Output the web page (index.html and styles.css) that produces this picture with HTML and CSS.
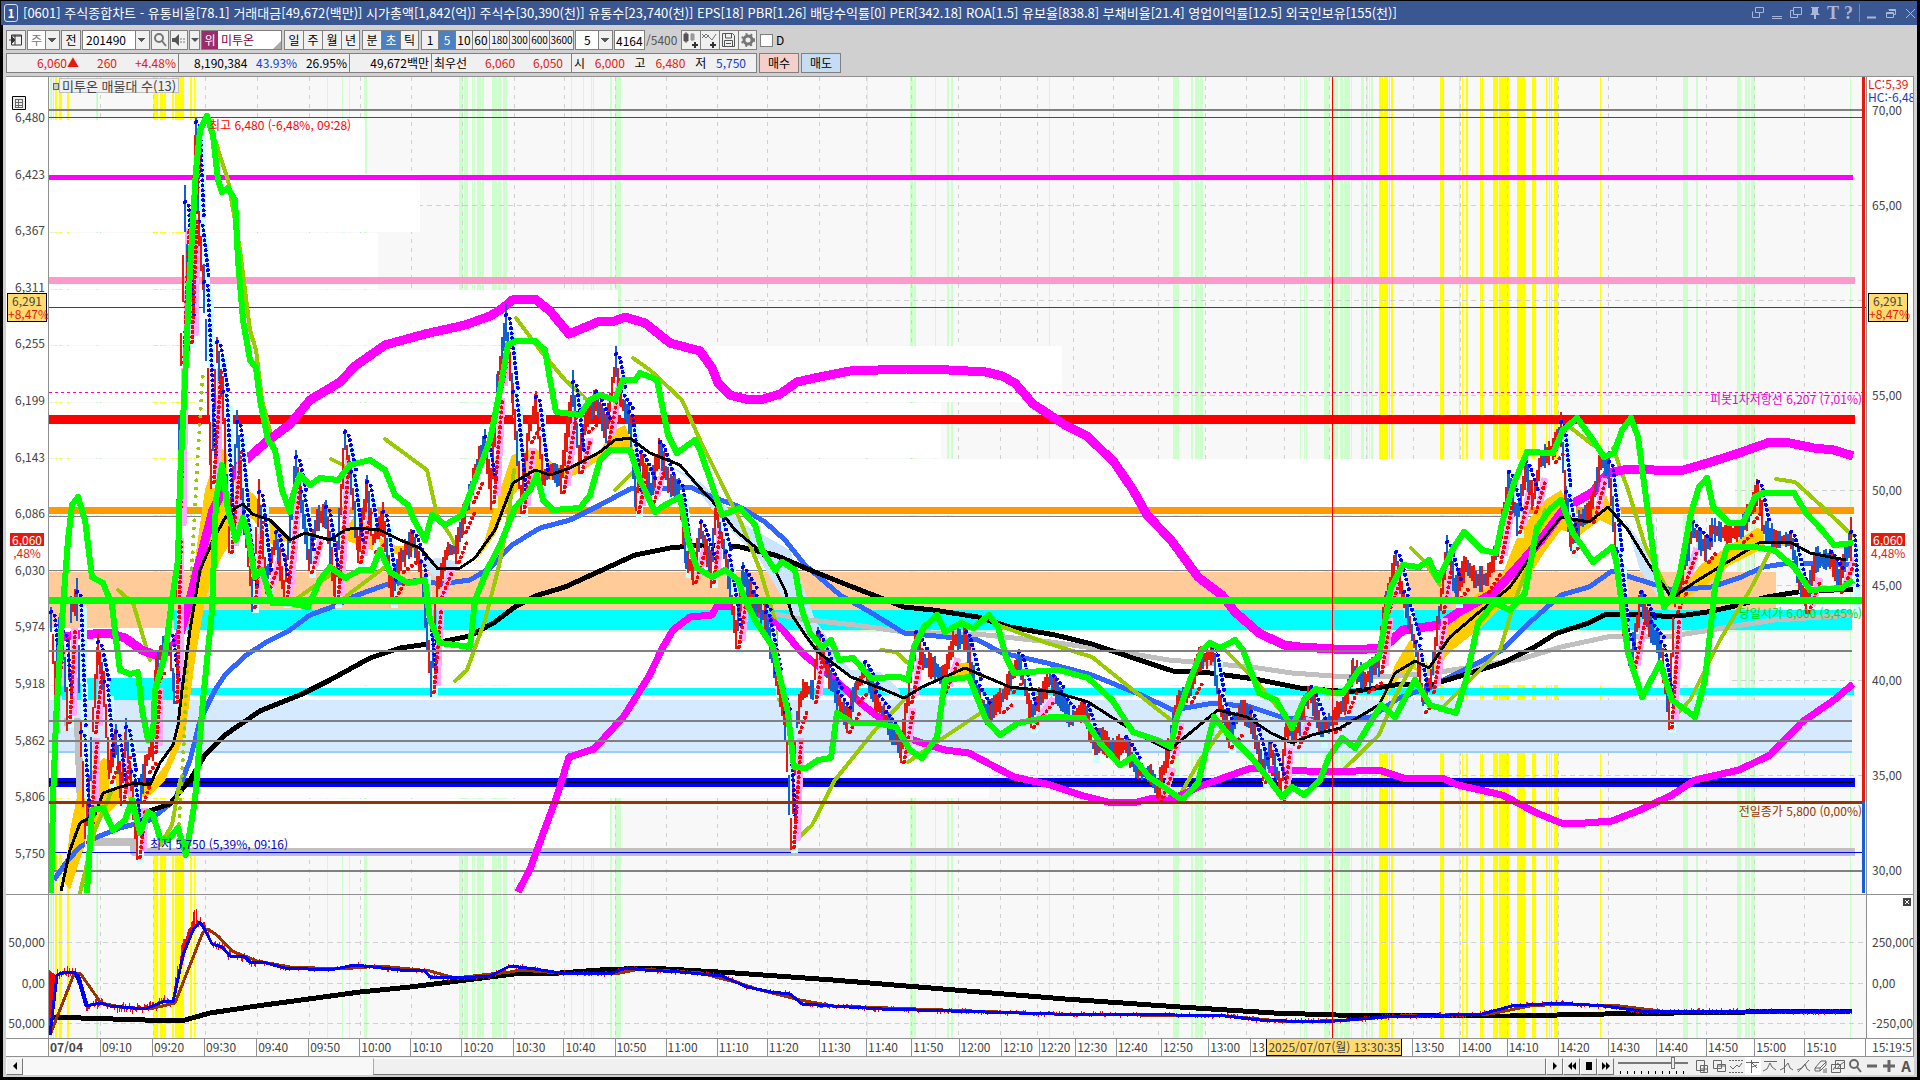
FILE: index.html
```html
<!DOCTYPE html>
<html lang="ko">
<head>
    <meta charset="UTF-8">
    <meta name="viewport" content="width=device-width, initial-scale=1.0">
    <title>[0601] 주식종합차트</title>
    <link rel="stylesheet" href="styles.css">
</head>

<body>
    <header class="titlebar">
        <span class="win-no">1</span>
        <h1>[0601] 주식종합차트 - 유통비율[78.1] 거래대금[49,672(백만)] 시가총액[1,842(억)] 주식수[30,390(천)] 유통수[23,740(천)] EPS[18] PBR[1.26] 배당수익률[0] PER[342.18] ROA[1.5] 유보율[838.8] 부채비율[21.4] 영업이익률[12.5] 외국인보유[155(천)]</h1>
        <div class="win-btns">
            <button aria-label="새창"><svg width="14" height="14"><path d="M4.500 1.500h8v5h-8zM1.500 5.500v6h7v-5" /></svg></button>
            <button aria-label="내리기"><svg width="14" height="14"><path d="M2 10.500h10M2 12.500h10" /></svg></button>
            <button aria-label="복사"><svg width="14" height="14"><path d="M4.500 1.500h8v7h-8zM4 4.500H1.500v7h7V9" /></svg></button>
            <button aria-label="고정"><svg width="14" height="14"><path d="M3 1h8v1H10v5l2 2H8v4H6V9H2l2-2V2H3z" fill="#a9b8d8" stroke="none" /></svg></button>
            <button class="serif">T</button>
            <button class="serif">?</button>
            <i class="bar"></i>
            <button aria-label="최소화"><svg width="14" height="14"><path d="M2 11.500h9" stroke-width="2" /></svg></button>
            <button aria-label="복원"><svg width="14" height="14"><path d="M4.500 3.500h7v5h-2M2.500 6.500h7v5h-7zM3 7.500h6M5 4.500h6" /></svg></button>
            <button aria-label="닫기"><svg width="14" height="14"><path d="M3 3l9 9M12 3l-9 9" /></svg></button>
        </div>
    </header>

    <main class="window">
        <div class="toolbar">
            <button class="ic" aria-label="패널"><svg width="16" height="16"><path d="M3.500 3v10h10V3zM7 3v10M3 4h11" fill="none" stroke="#333" /><path d="M1 8h5M4 5l3 3-3 3z" fill="#333" stroke="#333" /></svg></button>
            <select class="kind dim" aria-label="종류"><option>주</option></select>
            <button class="ic">전</button>
            <select class="code" aria-label="종목코드"><option>201490</option></select>
            <button class="ic small" aria-label="검색"><svg width="16" height="16" fill="none" stroke="#777" stroke-width="2"><circle cx="7" cy="6" r="4" /><path d="M10 9l4 5" /></svg></button>
            <button class="ic small" aria-label="소리"><svg width="16" height="16"><path d="M1 6h3l4-4v12l-4-4H1z" fill="#555" /><path d="M10 6v5M13 6v5" stroke="#777" stroke-dasharray="2 1" /></svg></button>
            <button class="tiny" aria-label="소리 메뉴"><i class="caret"></i></button>
            <span class="name"><b>위</b>미투온</span>
            <div class="group">
                <button>일</button><button>주</button><button>월</button><button>년</button>
            </div>
            <div class="group">
                <button>분</button><button class="on">초</button><button>틱</button>
            </div>
            <div class="group nums">
                <button>1</button><button class="on">5</button><button>10</button><button>60</button><button class="n3">180</button><button class="n3">300</button><button class="n3">600</button><button class="n4">3600</button>
            </div>
            <select class="gap5" aria-label="주기"><option>5</option></select>
            <input class="count" type="text" value="4164" aria-label="개수">
            <span class="total">/5400</span>
            <div class="group icons">
                <button aria-label="봉 추가"><svg width="18" height="18"><path d="M2 3h4v7H2zM4 1v11" fill="#555" stroke="#555" /><path d="M9 3h3v6H9zM10 2v8" fill="#999" stroke="#999" /><path d="M13 11v6M10 14h6" stroke="#333" stroke-width="2" /></svg></button>
                <button aria-label="지표 추가"><svg width="18" height="18" fill="none"><path d="M1 7l4-4 6 6 4-6M1 3l4 4 3-3" stroke="#777" /><path d="M12 11v6M9 14h6" stroke="#333" stroke-width="2" /></svg></button>
                <button aria-label="저장"><svg width="18" height="18" fill="none" stroke="#555"><path d="M2.500 2.500h10l2 2v11h-12zM5.500 3v4h6V3M4.500 15V9.500h8V15M6 12.500h5" /></svg></button>
                <button aria-label="설정"><svg width="18" height="18" fill="none" stroke="#777"><circle cx="9" cy="9" r="4" stroke-width="3" /><circle cx="9" cy="9" r="6" stroke-width="2" stroke-dasharray="2 3" /></svg></button>
            </div>
            <label class="chk"><input type="checkbox"> D</label>
        </div>

        <div class="quote">
            <div class="q q1"><b class="up">6,060▲</b><b class="up">260</b><b class="up">+4.48%</b></div>
            <div class="q q2"><b>8,190,384</b><b class="down">43.93%</b><b>26.95%</b></div>
            <div class="q q3"><b>49,672백만</b></div>
            <div class="q q4"><b>최우선</b><b class="up">6,060</b><b class="up">6,050</b></div>
            <div class="q q5"><b>시</b><b class="up">6,000</b><b>고</b><b class="up">6,480</b><b>저</b><b class="down">5,750</b></div>
            <button class="buy">매수</button>
            <button class="sell">매도</button>
        </div>

        <section class="chart">
            <div class="axis left main-axis">
                <span>6,480</span><span>6,423</span><span>6,367</span><span>6,311</span><span>6,255</span><span>6,199</span><span>6,143</span><span>6,086</span><span>6,030</span><span>5,974</span><span>5,918</span><span>5,862</span><span>5,806</span><span>5,750</span>
                <svg class="grid-icon" width="14" height="14"><path d="M.5.5h13v13H.5z" fill="#eee" stroke="#000" /><path d="M3 3.500h8M3 6.500h8M3 9.500h8M3.500 3v8M6.500 3v8M10.500 3v8M3 11.500h8" stroke="#666" /></svg>
                <div class="cursor-tag">6,291<em>+8,47%</em></div>
                <div class="last-tag"><b>6,060</b><em>,48%</em></div>
            </div>

            <div class="plot">
                <svg id="plot" viewBox="49 77 1817 961" preserveAspectRatio="none"></svg>
                <div class="legend">미투온 매물대 수(13)</div>
                <span class="note high">최고 6,480 (-6,48%, 09:28)</span>
                <span class="note low">최저 5,750 (5,39%, 09:16)</span>
                <span class="note pivot">피봇1차저항선 6,207 (7,01%)</span>
                <span class="note open">당일시가 6,000 (3,45%)</span>
                <span class="note close">전일종가 5,800 (0,00%)</span>
            </div>

            <div class="axis right main-axis">
                <div class="lchc"><span class="up">LC:5,39</span><span class="down">HC:-6,48</span></div>
                <span>70,00</span><span>65,00</span><span></span><span>55,00</span><span>50,00</span><span>45,00</span><span>40,00</span><span>35,00</span><span>30,00</span>
                <div class="cursor-tag">6,291<em>+8,47%</em></div>
                <div class="last-tag"><b>6,060</b><em>4,48%</em></div>
            </div>

            <div class="axis left sub-axis"><span>50,000</span><span>0,00</span><span>50,000</span></div>
            <div class="axis right sub-axis">
                <button class="close-x" aria-label="지표 닫기"><svg width="8" height="8"><path d="M2 2l4 4M6 2L2 6" stroke="#fff" /></svg></button>
                <span>250,000</span><span>0,00</span><span>-250,000</span>
            </div>

            <div class="time-pad"></div>
            <div class="times" id="times"><div class="time-tag">2025/07/07(월) 13:30:35</div></div>
            <div class="time-end">15:19:5</div>
        </section>

        <footer class="bottom">
            <button class="sq" aria-label="왼쪽"><svg width="10" height="10"><path d="M7 1v8L3 5z" /></svg></button>
            <div class="track"><div class="thumb"></div></div>
            <button class="sq" aria-label="재생"><svg width="10" height="10"><path d="M3 1v8l4-4z" /></svg></button>
            <button class="sq" aria-label="느리게"><svg width="10" height="10"><path d="M5 1v8L1 5zM9 1v8L5 5z" /></svg></button>
            <button class="sq" aria-label="정지"><svg width="10" height="10"><path d="M2 1h6v8H2z" /></svg></button>
            <button class="sq" aria-label="빠르게"><svg width="10" height="10"><path d="M1 1v8l4-4zM5 1v8l4-4z" /></svg></button>
            <div class="speed"><input type="range" min="0" max="10" value="8" aria-label="속도"></div>
            <div class="tools">
                <button aria-label="창 추가"><svg width="16" height="16"><path d="M2.500 2.500h8v10h-8zM6.500 7.500h7v7h-7zM10 8v6M7 11h6" /></svg></button>
                <button aria-label="창 겹침"><svg width="16" height="16"><path d="M2.500 2.500h8v8h-8zM6.500 6.500h8v7h-8zM7 8h7" /></svg></button>
                <button aria-label="영역"><svg width="16" height="16"><path d="M1 2.500h14M1 14.500h14" stroke-dasharray="2 1" /><path d="M2 8l3 3 4-4 2 2 3-4" /></svg></button>
                <button class="on" aria-label="십자선"><svg width="16" height="16"><path d="M1 4.500h13M6.500 2v13M7 5l5 5M7 9l5-2" /></svg></button>
                <button aria-label="고점"><svg width="16" height="16"><path d="M2 3.500h13M1 13l4-2 3-6 2 4 4 3" /></svg></button>
                <button aria-label="저점"><svg width="16" height="16"><path d="M5.500 1v14M1 12l4-2 4-5 2 5 3 2" /></svg></button>
                <button aria-label="추세선"><svg width="16" height="16"><path d="M2 14L13 2M1 12l5-2 3-4 2 5 3 2" /></svg></button>
                <button aria-label="지우개"><svg width="16" height="16"><path d="M2 10l6-7h5v4l-6 6H2zM2 10h5l6-6M7 10v3M11 11v4M13 10v5" /></svg></button>
                <button aria-label="복제"><svg width="16" height="16"><path d="M5.500 2.500h9v8h-9zM1.500 6.500h9v8h-9z" /><path d="M3 12l2-3 2 2 3-4M7 5l3 2 4-3" /></svg></button>
                <button aria-label="확대경"><svg width="16" height="16" stroke-width="2"><circle cx="7" cy="6" r="4" /><path d="M10 9l4 5" /></svg></button>
                <button aria-label="축소"><svg width="16" height="16"><path d="M3 8h10" stroke-width="3" /></svg></button>
                <button aria-label="확대"><svg width="16" height="16"><path d="M2 8h12M8 2v12" stroke-width="3" /></svg></button>
                <button class="a">A</button>
            </div>
        </footer>
    </main>

    <script src="chart.js"></script>
</body>
</html>
```
FILE: styles.css
```css
* {
    box-sizing: border-box;
}
body {
    margin: 0;
    height: 100vh;
    display: flex;
    flex-direction: column;
    padding: 1px 3px 3px 1px;
    background: #000;
    overflow: hidden;
    font-family: "Noto Sans CJK KR", sans-serif;
    font-size: 12px;
    line-height: 14px;
    color: #000;
}
button, input, select {
    font: inherit;
    color: inherit;
    margin: 0;
    padding: 0;
}
em, b {
    font-style: normal;
    font-weight: normal;
}
.up { color: #e61a0c; }
.down { color: #1040c8; }

/* title bar */
.titlebar {
    height: 24px;
    flex: none;
    display: flex;
    align-items: center;
    background: #3a5791;
    color: #fff;
    padding: 0 0 0 3px;
}
.win-no {
    width: 14px;
    height: 18px;
    line-height: 16px;
    text-align: center;
    border: 1px solid #dbe2f0;
    border-radius: 3px;
    font-weight: bold;
    margin-right: 5px;
}
.titlebar h1 {
    margin: 0;
    flex: 1;
    font-size: 13px;
    font-weight: normal;
    white-space: pre;
}
.win-btns {
    display: flex;
    align-items: center;
    gap: 5px;
}
.win-btns button {
    width: 14px;
    height: 16px;
    background: none;
    border: 0;
    color: #a9b8d8;
}
.win-btns svg {
    fill: none;
    stroke: #a9b8d8;
    display: block;
}
.win-btns .serif {
    font-family: "Liberation Serif", serif;
    font-size: 18px;
    font-weight: bold;
    width: 11px;
}
.bar {
    width: 1px;
    height: 18px;
    background: #7188b5;
}

.window {
    flex: 1;
    min-height: 0;
    display: flex;
    flex-direction: column;
    margin-left: 2px;
    padding: 5px 3px 2px;
    background: #d0d0d0;
}

/* toolbar */
.toolbar {
    display: flex;
    align-items: center;
    height: 20px;
    flex: none;
    gap: 1px;
}
.toolbar button, .toolbar select, .count, .name {
    height: 20px;
    border: 1px solid #808080;
    background: #f0f0f0;
    white-space: nowrap;
}
.toolbar button {
    display: flex;
    align-items: center;
    justify-content: center;
}
.ic { width: 20px; }
.small { width: 18px; }
.toolbar .tiny { width: 11px; }
.caret {
    border: 4px solid transparent;
    border-top-color: #555;
    border-bottom: 0;
}
.toolbar select {
    appearance: none;
    border-radius: 0;
    padding-left: 3px;
    background: linear-gradient(45deg, transparent 50%, #555 50%) right 7px center / 4px 4px no-repeat,
        linear-gradient(-45deg, transparent 50%, #555 50%) right 3px center / 4px 4px no-repeat,
        linear-gradient(#808080, #808080) right 13px center / 1px 20px no-repeat,
        linear-gradient(#f0f0f0, #f0f0f0) right / 13px 20px no-repeat, #fff;
}
.kind { width: 33px; }
.dim { color: #777; }
.code { width: 68px; }
.toolbar .gap5 {
    width: 38px;
    padding-left: 8px;
}
.name {
    position: relative;
    display: flex;
    align-items: center;
    width: 81px;
    background: #fff;
    color: #800040;
    gap: 3px;
}
.name b {
    background: #9c2b6c;
    color: #fff;
    height: 18px;
    line-height: 18px;
    width: 16px;
    text-align: center;
}
.name::after {
    content: "";
    position: absolute;
    right: 0;
    bottom: 0;
    border: 4px solid #aaa;
    border-top-color: transparent;
    border-left-color: transparent;
}
.group {
    display: flex;
    margin-left: 1px;
}
.group button {
    width: 19px;
    border-right-width: 0;
}
.group button:last-child {
    border-right-width: 1px;
}
.nums button { width: 17px; }
.nums .n3 {
    width: 20px;
    font-size: 10px;
}
.nums .n4 {
    width: 25px;
    font-size: 10px;
}
.toolbar .on {
    background: #4c80c0;
    color: #fff;
}
.count {
    width: 31px;
    padding-left: 1px;
    background: #fff;
}
.total {
    color: #555;
    width: 33px;
}
.chk {
    display: flex;
    align-items: center;
    gap: 3px;
    margin-left: 2px;
}
.chk input {
    appearance: none;
    width: 13px;
    height: 13px;
    border: 1px solid #808080;
    background: #fff;
}

/* quote line */
.quote {
    display: flex;
    height: 20px;
    flex: none;
    margin: 3px 0;
}
.q {
    display: flex;
    align-items: center;
    justify-content: space-between;
    background: #f0f0f0;
    border: 1px solid #808080;
    border-right-width: 0;
    padding: 0 2px;
    white-space: nowrap;
}
.q1 { width: 172px; padding-left: 30px; }
.q2 { width: 171px; padding-left: 15px; }
.q3 { width: 82px; justify-content: flex-end; }
.q4 { width: 140px; padding-right: 8px; }
.q5 { width: 186px; padding-right: 10px; border-right-width: 1px; }
.quote button {
    width: 40px;
    border: 1px solid #808080;
    margin-left: 2px;
}
.buy { background: #f5cfc9; }
.sell { background: #c5dcf2; }

/* chart */
.chart {
    flex: 1;
    min-height: 0;
    display: grid;
    grid-template-columns: 43px 1fr 47px;
    grid-template-rows: 817fr 144fr 18px;
    border: 1px solid #909090;
    border-left-width: 0;
    background: #fff;
    color: #444;
}
.axis {
    position: relative;
    display: flex;
    flex-direction: column;
    justify-content: space-between;
    min-height: 0;
    min-width: 0;
    overflow: hidden;
    white-space: nowrap;
}
.axis > span {
    height: 14px;
}
.left { text-align: right; border-right: 1px solid #909090; padding-right: 3px; }
.right { border-left: 1px solid #909090; padding-left: 5px; }
.left.main-axis { padding-top: 33px; padding-bottom: 34px; }
.right.main-axis { padding-top: 26px; padding-bottom: 17px; }
.sub-axis { padding-top: 40px; padding-bottom: 8px; border-top: 1px solid #909090; }
.main-axis { grid-row: 1; }
.left { grid-column: 1; }
.right { grid-column: 3; }
.sub-axis { grid-row: 2; }
.plot {
    position: relative;
    grid-column: 2;
    grid-row: 1 / 3;
    min-height: 0;
    background: #f8f8f8;
}
#plot {
    position: absolute;
    width: 100%;
    height: 100%;
    shape-rendering: crispEdges;
}
.grid-icon {
    position: absolute;
    left: 6px;
    top: 19px;
}
.cursor-tag {
    position: absolute;
    left: 1px;
    top: 216px;
    width: 40px;
    height: 29px;
    border: 1px solid #000;
    background: #ffdb70;
    line-height: 13px;
    text-align: center;
}
.cursor-tag em, .last-tag em {
    display: block;
    color: #e61a0c;
}
.last-tag {
    position: absolute;
    left: 4px;
    top: 456px;
    width: 34px;
    line-height: 13px;
    text-align: center;
}
.last-tag b {
    display: block;
    background: #e61a0c;
    color: #fff;
}
.lchc {
    position: absolute;
    left: 1px;
    top: 0;
    line-height: 13px;
}
.lchc span {
    display: block;
}
.close-x {
    position: absolute;
    right: 2px;
    top: 3px;
    width: 8px;
    height: 8px;
    border: 0;
    background: #444;
}
.close-x svg {
    display: block;
}
.legend {
    position: absolute;
    left: 10px;
    top: 1px;
    height: 15px;
    padding: 0 2px;
    border: 1px solid #c0c0c0;
    background: #f0f0f0;
    white-space: nowrap;
    font-size: 13px;
    line-height: 13px;
}
.legend::before {
    content: "";
    position: absolute;
    left: -7px;
    top: 4px;
    width: 4px;
    height: 5px;
    border: 1px solid #666;
    background: #ccc;
}
.note {
    position: absolute;
    white-space: nowrap;
}
.high { left: 160px; top: 41px; color: #f00; }
.low { left: 101px; top: 760px; color: #00c; }
.pivot { right: 4px; top: 315px; color: #e600c8; }
.open { right: 4px; top: 529px; color: #0d0; }
.close { right: 4px; top: 727px; color: #930; }
.time-pad, .times, .time-end {
    border-top: 1px solid #909090;
    line-height: 16px;
    white-space: nowrap;
    overflow: hidden;
}
.time-pad { border-right: 1px solid #909090; }
.times {
    position: relative;
    display: flex;
}
.times > span {
    padding-left: 1px;
    min-width: 0;
    overflow: hidden;
    border-right: 1px solid #909090;
}
.times > span:first-child {
    font-weight: bold;
}
.time-tag {
    position: absolute;
    left: 67%;
    top: -1px;
    width: 136px;
    height: 18px;
    border: 1px solid #000;
    background: #ffdb70;
    text-align: center;
    line-height: 16px;
}
.time-end { padding-left: 6px; }

/* scroll bar row */
.bottom {
    display: flex;
    align-items: center;
    height: 18px;
    flex: none;
    background: #f0f0f0;
}
.sq {
    width: 17px;
    height: 17px;
    display: flex;
    align-items: center;
    justify-content: center;
    background: #f0f0f0;
    border: 1px solid #fff;
    border-right-color: #777;
    border-bottom-color: #777;
}
.track {
    flex: 1;
    display: flex;
    justify-content: flex-end;
    background: #f8f8f8;
}
.thumb {
    width: 77%;
    height: 17px;
    background: #f0f0f0;
    border: 1px solid #fff;
    border-left-color: #aaa;
    border-right-color: #777;
    border-bottom-color: #777;
}
.speed {
    width: 80px;
    height: 18px;
    padding: 0 4px;
    background: repeating-linear-gradient(90deg, #000 0 1px, transparent 1px 7px) 6px 14px / 68px 3px no-repeat;
}
.speed input {
    appearance: none;
    display: block;
    width: 70px;
    height: 12px;
    background: linear-gradient(#777, #777) center 5px / 100% 2px no-repeat;
}
.speed input::-webkit-slider-thumb {
    appearance: none;
    width: 4px;
    height: 12px;
    background: #eee;
    border: 1px solid #777;
}
.tools {
    display: flex;
    gap: 1px;
}
.tools button {
    width: 16px;
    height: 18px;
    border: 0;
    background: none;
}
.tools .on { background: #fff; }
.tools svg {
    display: block;
    fill: none;
    stroke: #666;
}
.tools .a {
    font-weight: bold;
    font-size: 15px;
    color: #555;
}
```
FILE: chart.js
```js
const svg = document.getElementById("plot");
let out = "";

function rect(x1, y1, x2, y2, color) {
    out += `<rect x="${x1}" y="${y1}" width="${x2 - x1}" height="${y2 - y1}" fill="${color}"/>`;
}
function hline(y, x2, w, color, extra = "") {
    out += `<path d="M49 ${y}H${x2}" stroke="${color}" stroke-width="${w}" ${extra}/>`;
}
function line(pts, w, color, extra = "") {
    out += `<polyline points="${pts}" fill="none" stroke="${color}" stroke-width="${w}" stroke-linejoin="round" ${extra}/>`;
}
function area(pts, color) {
    out += `<polygon points="${pts}" fill="${color}"/>`;
}
// fixed seed so that the candles are the same on each load
let seed = 7;
function rnd() {
    seed = (seed * 16807) % 2147483647;
    return seed / 2147483647;
}

// signal bars: x, width
const yellow = [[51,1],[53,1],[55,2],[59,3],[67,2],[97,1],[154,1],[155,3],[160,3],[164,2],[172,2],[175,9],[190,2],[194,1],
    [1379,4],[1384,4],[1389,1],[1391,2],[1440,4],[1459,1],[1462,1],[1466,2],[1480,1],[1482,1],[1493,5],[1499,10],[1517,8],[1532,4],[1546,1],[1549,1],[1551,1],[1554,4],[1600,1]];
const green = [[50,1],[96,1],[153,1],[327,1],[342,1],[349,1],[364,3],[459,4],[464,4],[472,1],[474,1],[477,4],[482,2],[492,5],[498,3],[503,4],[571,1],[583,1],[591,1],[593,1],[610,2],[615,6],
    [867,1],[910,3],[914,2],[935,1],[947,2],[951,2],[1049,1],[1173,6],[1191,2],[1195,4],[1200,3],[1300,1],[1304,1],[1306,1],[1324,5],[1333,5],[1340,3],[1344,6],[1351,1],[1361,3],[1366,2],[1369,1],[1371,2],
    [1683,5],[1696,2],[1737,4],[1745,2],[1748,2],[1751,4],[1850,1]];
green.forEach(b => rect(b[0], 77, b[0] + b[1], 1038, "#ccffcc"));
yellow.forEach(b => rect(b[0], 77, b[0] + b[1], 1038, "#ffff00"));

// grid
[101,154,206,258,310,361,412,463,515,565,616,667,718,768,820,867,912,959,1001,1038,1074,1114,1159,1206,1247,1285,1330,1367,1414,1461,1508,1559,1609,1657,1707,1755,1805].forEach(x => {
    out += `<path d="M${x - .5} 77V1038" stroke="#d0d0d0" stroke-dasharray="4 5"/>`;
});
[205.5,300.5,395.5,490.5,585.5,680.5,775.5,942.5,983.5,1023.5].forEach(y => hline(y, 1866, 1, "#d0d0d0", 'stroke-dasharray="5 4"'));

// volume profile
[[120,174,365],[174,232,420],[233,289,378],[290,345,618],[346,402,1062],[403,458,941],[459,515,1735],[516,571,1648],[628,685,1729],[686,741,1300],[742,798,989],[799,854,610]].forEach(b => rect(49, b[0], b[2], b[1], "#fff"));
rect(49, 572, 174, 628, "#ffcc99");
rect(174, 572, 1776, 610, "#ffcc99");
rect(174, 610, 1852, 630, "#00ffff");
rect(174, 630, 1852, 632, "#ccffcc");
rect(62, 678, 175, 700, "#00ffff");
rect(49, 700, 1852, 751, "#d6eaff");

// fixed levels
hline(109.5, 1862, 2, "#808080");
hline(117.5, 1862, 1, "#f00");
hline(177.5, 1853, 5, "#f0f");
hline(280.5, 1855, 7, "#ff99cc");
hline(307.5, 1866, 1, "#e00000");
hline(392.5, 1862, 1, "#f0c", 'stroke-dasharray="3 3"');
hline(419.5, 1855, 9, "#f00");
hline(510.5, 1854, 7, "#ff9900");
hline(516.5, 1648, 1, "#808080");
hline(570.5, 1648, 1, "#808080");
out += `<path d="M174 691.5H1854" stroke="#0ff" stroke-width="7"/>`;
hline(752, 1852, 2, "#99ccff");
hline(782.5, 1855, 9, "#00f");
hline(782, 1853, 2, "#000");
line("64,722 78,722 82,835 88,842 134,842 134,852 1855,852", 8, "#c0c0c0");
hline(852.5, 1862, 1, "#00f");
hline(871, 1862, 2, "#808080");

// clouds between the short average and the price
const gold = "#ffcc00", sky = "#cce5ff";
area("64,882 70,830 78,792 88,775 103,758 112,760 125,785 150,785 165,765 178,735 184,680 195,560 205,490 215,458 222,448 232,462 240,485 255,495 270,520 290,540 272,545 252,518 235,535 220,560 212,580 205,600 195,660 185,735 165,780 150,795 120,802 90,830 70,890", gold);
area("480,555 495,505 512,455 535,448 555,465 575,465 600,450 615,430 625,425 635,450 660,480 620,447 575,475 550,480 520,487 510,500 495,535 470,570", gold);
area("1380,705 1395,665 1410,640 1420,650 1430,668 1450,622 1475,595 1500,580 1520,530 1545,500 1561,490 1575,520 1593,510 1606,495 1620,530 1600,520 1580,535 1561,530 1546,550 1520,590 1480,628 1450,652 1430,676 1410,668 1395,682", gold);
area("1672,605 1700,565 1730,545 1757,528 1770,532 1790,545 1760,550 1730,565 1700,590", gold);
area("945,678 960,663 970,662 985,678 965,676", gold);
area("355,515 372,530 390,545 420,548 400,555 372,550 340,538", gold);
area("630,440 660,460 700,482 745,525 790,550 815,620 850,670 880,672 900,690 900,700 860,680 815,655 790,610 760,560 720,520 690,480", sky);
area("1625,520 1650,555 1668,590 1660,600 1640,570", sky);
area("420,560 438,558 460,562 450,580 435,578", sky);

// moving averages
line("770,613 800,619 855,625 904,632 986,635 1051,642 1108,650 1169,660 1251,667 1292,673 1332,676 1379,677 1434,673 1521,659 1561,647 1612,636 1672,636 1711,630 1774,620 1853,615", 5, "#c0c0c0");
line("54,880 68,860 80,847 95,838 120,828 150,820 175,800 190,760 200,720 215,690 225,675 245,656 265,643 290,630 310,615 340,604 355,596 385,585 420,580 440,584 470,580 490,568 512,545 540,528 570,520 600,505 630,489 670,488 690,487 710,496 740,507 765,522 785,540 805,565 840,595 870,612 904,633 978,640 1002,653 1047,663 1092,675 1141,695 1173,710 1214,703 1251,707 1284,718 1332,720 1371,717 1399,698 1430,687 1470,667 1502,650 1529,623 1561,595 1589,587 1612,571 1640,580 1672,590 1711,587 1739,578 1763,567 1790,563 1853,565", 5, "#3366ff");
line("140,814 170,804 190,780 205,755 225,735 260,711 300,695 330,680 370,658 400,648 435,643 470,636 495,622 515,607 535,596 565,587 600,571 635,555 670,548 700,545 740,547 775,555 810,570 850,586 904,607 933,610 978,617 1010,627 1055,635 1092,644 1133,658 1173,671 1210,673 1255,679 1300,688 1350,692 1395,685 1434,684 1470,673 1502,663 1533,648 1557,633 1589,623 1604,615 1640,614 1672,617 1707,612 1735,606 1767,597 1798,592 1853,589", 5, "#000");

// parabolic tails
["118,590 133,603 150,660", "80,893 95,830 112,790", "160,845 172,825 180,780", "215,140 228,180 240,250 250,330 256,350 262,400 275,450", "331,459 345,466", "385,439 427,470 437,515 450,535 455,545", "516,318 540,350 565,380 587,400", "633,358 650,370 682,400 700,440 720,480 740,520 760,570 775,620 779,700", "455,681 467,670 485,620 498,570 508,520 514,470", "615,490 635,470", "794,842 812,825 835,780 875,730 904,700", "295,600 330,575", "345,597 385,567", "881,650 896,652 910,665", "908,762 940,740 985,710", "998,625 1047,643 1092,657 1133,690 1171,720", "1180,795 1200,760 1222,730", "1225,650 1255,680 1280,710", "1345,768 1379,735 1395,697 1415,660", "1411,548 1425,562 1440,585", "1440,710 1470,680 1500,650 1515,600 1530,560 1545,510", "1571,428 1593,445", "1613,448 1628,490 1645,545 1672,600", "1671,720 1690,700 1720,640 1750,590 1772,547", "1776,479 1795,482 1815,500 1852,535"].forEach(p => line(p, 4, "#99cc00", 'stroke-linecap="round"'));
line("178,840 184,740 190,600 197,470 203,370", 4, "#99cc00", 'stroke-dasharray="0 8" stroke-linecap="round"');

// wide outer bands
line("57,638 62,637 78,635 108,633 125,638 142,650 155,655 168,652 178,640 190,600 200,560 213,510 226,484 240,465 265,443 290,424 310,400 340,382 355,366 385,345 425,334 465,325 490,316 503,308 512,300 535,299 550,311 569,334 600,321 612,322 625,317 645,323 670,343 700,351 712,368 718,383 730,395 745,399 760,400 780,394 797,382 815,378 850,371 906,369 949,370 986,372 1002,376 1015,383 1033,404 1050,415 1065,425 1087,436 1114,462 1133,490 1147,515 1171,540 1198,577 1222,595 1235,612 1259,633 1284,645 1300,647 1351,650 1383,648 1403,630 1440,625 1462,610 1494,593 1521,563 1541,540 1565,508 1593,492 1608,473 1628,469 1680,471 1711,462 1739,453 1770,442 1790,443 1814,448 1834,450 1853,456", 9, "#f0f");
line("518,892 530,869 557,796 569,757 594,749 624,716 649,676 663,647 673,630 690,617 712,615 717,606 740,607 767,617 783,630 802,653 835,680 863,705 904,737 945,750 969,753 1014,777 1051,785 1080,795 1108,802 1133,803 1149,799 1175,798 1198,787 1251,768 1280,770 1333,772 1379,770 1403,778 1442,778 1458,785 1502,795 1537,813 1561,823 1585,823 1612,821 1640,810 1672,795 1695,780 1739,770 1770,755 1802,722 1834,700 1853,684", 7, "#f0f");

// price: swing points, candles are filled in between them
const price = [[50,620],[54,680],[58,630],[62,640],[66,710],[70,610],[76,600],[80,740],[84,830],[88,800],[92,720],[97,650],[103,690],[108,770],[115,740],[120,790],[125,735],[130,780],[136,845],[140,790],[146,760],[152,740],[155,670],[160,650],[168,640],[173,690],[176,520],[180,350],[184,210],[188,330],[192,200],[195,130],[198,230],[203,290],[210,470],[216,350],[222,400],[228,540],[236,430],[243,520],[251,595],[258,500],[265,580],[275,540],[283,590],[295,465],[300,500],[308,560],[316,520],[325,515],[334,590],[344,440],[350,480],[357,550],[366,490],[372,540],[382,520],[390,590],[400,560],[412,540],[420,570],[430,680],[436,590],[447,550],[455,550],[462,520],[470,490],[478,460],[484,445],[490,490],[497,380],[505,323],[512,400],[520,500],[528,430],[535,405],[542,480],[550,470],[560,480],[572,390],[578,460],[585,420],[595,400],[605,430],[615,362],[620,400],[628,420],[635,500],[640,460],[650,490],[659,450],[668,485],[678,490],[685,560],[692,570],[700,530],[710,570],[715,510],[725,560],[735,635],[742,575],[752,600],[765,620],[775,680],[784,720],[790,835],[796,720],[802,690],[812,690],[817,640],[826,670],[837,700],[846,720],[855,690],[864,670],[875,700],[885,720],[900,750],[908,690],[915,640],[922,660],[935,670],[942,680],[953,640],[965,640],[975,690],[985,715],[1000,700],[1010,680],[1018,660],[1030,715],[1049,680],[1060,700],[1070,720],[1084,710],[1092,745],[1100,740],[1112,750],[1125,745],[1135,770],[1150,775],[1157,790],[1168,750],[1176,705],[1188,690],[1198,660],[1212,655],[1218,700],[1228,735],[1240,710],[1250,720],[1262,770],[1270,750],[1280,790],[1285,730],[1295,735],[1305,700],[1310,695],[1320,730],[1332,720],[1345,700],[1352,670],[1365,680],[1378,660],[1385,600],[1395,560],[1403,600],[1415,650],[1422,700],[1430,680],[1440,600],[1446,550],[1455,590],[1465,565],[1475,580],[1485,580],[1497,550],[1508,480],[1516,520],[1525,470],[1532,500],[1540,460],[1552,450],[1560,430],[1565,500],[1570,540],[1580,520],[1590,510],[1600,460],[1608,470],[1616,560],[1622,630],[1630,660],[1640,600],[1650,630],[1660,650],[1668,715],[1674,600],[1682,570],[1692,530],[1705,550],[1712,530],[1730,535],[1740,530],[1750,510],[1757,490],[1763,530],[1775,540],[1790,540],[1800,590],[1805,600],[1815,560],[1830,560],[1838,580],[1850,540],[1852,600]];

for (let i = 1; i < price.length; i++) {
    const [x1, y1] = price[i - 1], [x2, y2] = price[i];
    const rise = y2 < y1;
    if (Math.abs(y2 - y1) > 30) {
        line(`${x1 + 7},${y1 + 6} ${x2 + 5},${y2 + 18}`, 7, rise ? "#ffaaff" : "#ccffff");
    }
}
let up = "", dn = "", dotsUp = "", dotsDn = "";
for (let i = 1; i < price.length; i++) {
    const [x1, y1] = price[i - 1], [x2, y2] = price[i];
    const rise = y2 < y1;
    for (let x = x1; x < x2; x += 2) {
        const y = y1 + (y2 - y1) * (x - x1) / (x2 - x1);
        const h = 4 + rnd() * 10 + Math.min(Math.abs(y2 - y1) / (x2 - x1) * .6, 12);
        const top = Math.max(y - h, 118);
        const bar = `M${x + .5} ${Math.round(top)}v${Math.round(h * 1.9)}`;
        if (rnd() < (rise ? .75 : .45)) up += bar; else dn += bar;
    }
    if (Math.abs(y2 - y1) > 18) {
        if (rise) dotsUp += `M${x1 + 4} ${y1 + 12}L${x2 + 5} ${y2 + 22}`;
        else dotsDn += `M${x1 + 1} ${y1 - 8}L${x1 + 5} ${y1 - 4}L${x2 + 6} ${y2 - 10}`;
    }
}
out += `<path d="${dn}" stroke="#1560d0" stroke-width="2"/><path d="${up}" stroke="#e61a0c" stroke-width="2"/>`;
out += `<path d="${dotsDn}" fill="none" stroke="#0000ff" stroke-width="4" stroke-dasharray="0 5" stroke-linecap="round"/>`;
out += `<path d="${dotsUp}" stroke="#ff0000" stroke-width="4" stroke-dasharray="0 5" stroke-linecap="round"/>`;

line("61,891 70,850 80,823 95,815 103,793 120,787 135,783 150,785 160,763 173,745 178,725 182,690 190,630 200,570 213,540 225,518 235,508 243,504 252,514 270,520 290,540 305,533 330,540 345,530 355,528 380,530 400,540 420,548 438,569 460,568 475,558 495,530 513,483 535,470 550,475 570,468 600,452 615,440 630,438 650,453 680,465 700,488 715,504 735,530 760,551 775,570 785,590 792,615 805,635 818,652 851,677 880,688 904,698 922,687 965,668 986,677 1010,687 1055,692 1088,702 1124,725 1149,740 1169,750 1190,733 1218,710 1247,717 1271,733 1292,743 1312,735 1340,728 1379,705 1395,673 1415,661 1429,668 1450,637 1478,613 1510,587 1537,547 1561,517 1589,522 1608,507 1628,530 1648,563 1672,598 1695,582 1731,560 1759,543 1790,542 1810,553 1846,560", 3, "#000");

// green channel, upper then lower
line("51,893 53,800 56,720 62,620 68,540 72,505 78,497 85,520 92,577 103,583 112,605 116,640 120,670 130,674 138,672 142,710 148,740 153,735 155,690 165,655 172,600 178,560 180,480 185,380 190,270 196,170 200,130 207,116 213,135 218,180 222,192 228,188 235,200 238,260 243,320 250,360 256,368 260,400 268,440 275,450 282,490 290,512 293,495 300,475 310,485 320,478 338,480 350,465 370,460 385,470 395,495 408,505 413,518 425,540 432,515 445,525 462,515 475,480 490,440 500,390 508,345 516,341 535,341 545,350 550,380 556,412 580,415 590,400 600,395 615,400 623,380 635,380 640,373 650,377 657,380 662,405 668,435 677,453 695,440 700,450 712,485 722,515 740,508 755,525 762,550 775,570 782,562 795,570 802,610 810,633 822,647 831,640 839,660 853,658 871,678 900,677 908,680 914,647 924,627 937,615 945,632 961,623 973,628 989,615 998,627 1006,657 1014,673 1059,670 1088,678 1112,700 1133,732 1157,740 1171,747 1176,720 1190,680 1202,650 1210,643 1220,648 1235,640 1243,650 1259,693 1276,700 1292,728 1304,700 1316,689 1333,693 1343,693 1359,670 1379,657 1391,587 1403,565 1419,567 1429,560 1438,580 1454,547 1464,532 1482,550 1496,553 1502,523 1514,483 1527,452 1553,453 1563,430 1577,418 1593,440 1604,457 1614,453 1622,430 1631,418 1638,437 1648,513 1656,573 1664,607 1672,597 1680,573 1691,513 1699,487 1707,478 1713,507 1729,523 1743,523 1755,497 1763,493 1794,493 1806,513 1822,530 1834,545 1853,543", 6, "#00ff00");
line("87,893 92,810 103,808 113,830 125,820 132,800 140,833 148,812 153,815 160,838 168,840 178,828 186,855 195,800 203,700 212,610 216,500 222,465 228,510 236,540 243,518 247,530 255,577 262,570 272,603 290,603 308,607 320,580 330,567 345,578 360,570 372,570 380,550 390,572 408,583 425,580 430,620 440,643 470,647 475,600 488,568 500,545 515,508 530,490 537,475 543,500 553,510 580,508 590,495 600,460 610,450 630,450 640,480 655,512 665,505 680,497 688,540 697,568 712,577 725,570 738,580 745,600 755,620 773,647 788,713 794,767 806,768 818,760 831,758 837,713 853,723 875,723 896,727 910,750 922,758 937,737 945,680 969,677 986,720 1000,735 1018,723 1051,717 1084,718 1100,743 1120,765 1133,757 1149,777 1161,785 1182,800 1198,783 1214,717 1227,733 1251,757 1267,777 1282,797 1292,787 1304,795 1320,780 1329,757 1342,738 1355,748 1381,705 1395,717 1415,680 1430,705 1456,713 1466,680 1478,623 1494,603 1510,610 1525,593 1537,527 1551,508 1561,500 1573,533 1593,562 1612,547 1616,560 1628,653 1642,697 1660,663 1672,700 1695,717 1705,680 1715,587 1727,547 1755,547 1774,550 1794,567 1810,590 1842,588 1853,580", 6, "#00ff00");

// levels that stay on top
hline(600.5, 1862, 7, "#00ff00");
[651, 721, 741].forEach(y => hline(y, 1852, 2, "#808080"));
hline(802.5, 1862, 3, "#993300");
rect(1862, 77, 1865, 802, "#e61a0c");
rect(1862, 802, 1865, 893, "#1560d0");

// lower pane
hline(894.5, 1866, 1, "#909090");
line("49,1017 145,1020 185,1020 210,1013 257,1006 360,992 410,987 514,974 560,973 600,970 649,968 735,973 833,980 955,990 1065,999 1180,1007 1274,1013 1336,1015 1440,1016 1510,1016 1605,1014 1746,1012 1852,1011", 5, "#000");
const mid = [[50,1035],[57,975],[65,972],[75,972],[80,985],[86,1006],[101,1003],[110,1006],[145,1009],[165,1001],[173,1002],[183,955],[193,930],[200,922],[205,930],[212,944],[222,947],[230,956],[245,957],[250,962],[262,962],[285,968],[330,970],[355,965],[400,970],[425,971],[430,977],[460,978],[490,976],[510,966],[535,969],[560,973],[610,974],[625,968],[645,970],[680,972],[722,976],[747,987],[771,992],[790,994],[802,1004],[833,1006],[882,1009],[1053,1014],[1175,1015],[1225,1016],[1260,1020],[1286,1021],[1335,1021],[1384,1017],[1482,1014],[1512,1006],[1558,1003],[1604,1006],[1641,1011],[1700,1011],[1852,1012]];
let spikes = "";
for (let i = 1; i < mid.length; i++) {
    const [x1, y1] = mid[i - 1], [x2, y2] = mid[i];
    for (let x = x1; x < x2; x++) {
        const y = y1 + (y2 - y1) * (x - x1) / (x2 - x1);
        const steep = x > 173 && x < 198;
        const amp = steep ? 16 : x < 260 ? 6 : 3;
        spikes += `M${x + .5} ${y}v${Math.round(amp * (steep ? -rnd() - .2 : rnd() * 2 - 1))}`;
    }
}
area("49,970 56,975 52,1025 49,1033", "#f00");
area("173,1000 184,945 188,930 196,920 190,935 180,975", "#f00");
out += `<path d="${spikes}" stroke="#f00"/>`;
line("50,1035 74,974 80,973 101,1003 120,1007 150,1009 175,1003 190,965 203,932 208,929 218,936 232,951 257,961 290,967 340,969 380,966 430,971 455,978 510,972 520,970 560,973 615,974 640,969 700,973 735,982 760,990 800,1000 833,1006 1053,1014 1225,1016 1290,1022 1350,1020 1400,1016 1490,1014 1530,1006 1560,1004 1620,1006 1660,1011 1852,1012", 3, "#993300");
area("75,972 80,975 88,1003 86,1007 80,985", "#00f");
line(mid.map(p => p.join(",")).join(" "), 3, "#0000ff");

// crosshair
rect(1332, 77, 1333, 1038, "#f00000");
svg.innerHTML = out;

// time scale: label, width of the slot
const slots = [["07/04",52],["09:10",52],["09:20",52],["09:30",52],["09:40",52],["09:50",51],["10:00",51],["10:10",51],["10:20",52],["10:30",50],["10:40",51],["10:50",51],["11:00",51],["11:10",50],["11:20",52],["11:30",47],["11:40",45],["11:50",47],["12:00",42],["12:10",37],["12:20",36],["12:30",40],["12:40",45],["12:50",47],["13:00",41],["13:",167],["13:50",47],["14:00",47],["14:10",51],["14:20",50],["14:30",48],["14:40",50],["14:50",48],["15:00",50],["15:10",61]];
const times = document.getElementById("times");
times.insertAdjacentHTML("afterbegin", slots.map(s => `<span style="flex:${s[1]} 1 0">${s[0]}</span>`).join(""));
```
